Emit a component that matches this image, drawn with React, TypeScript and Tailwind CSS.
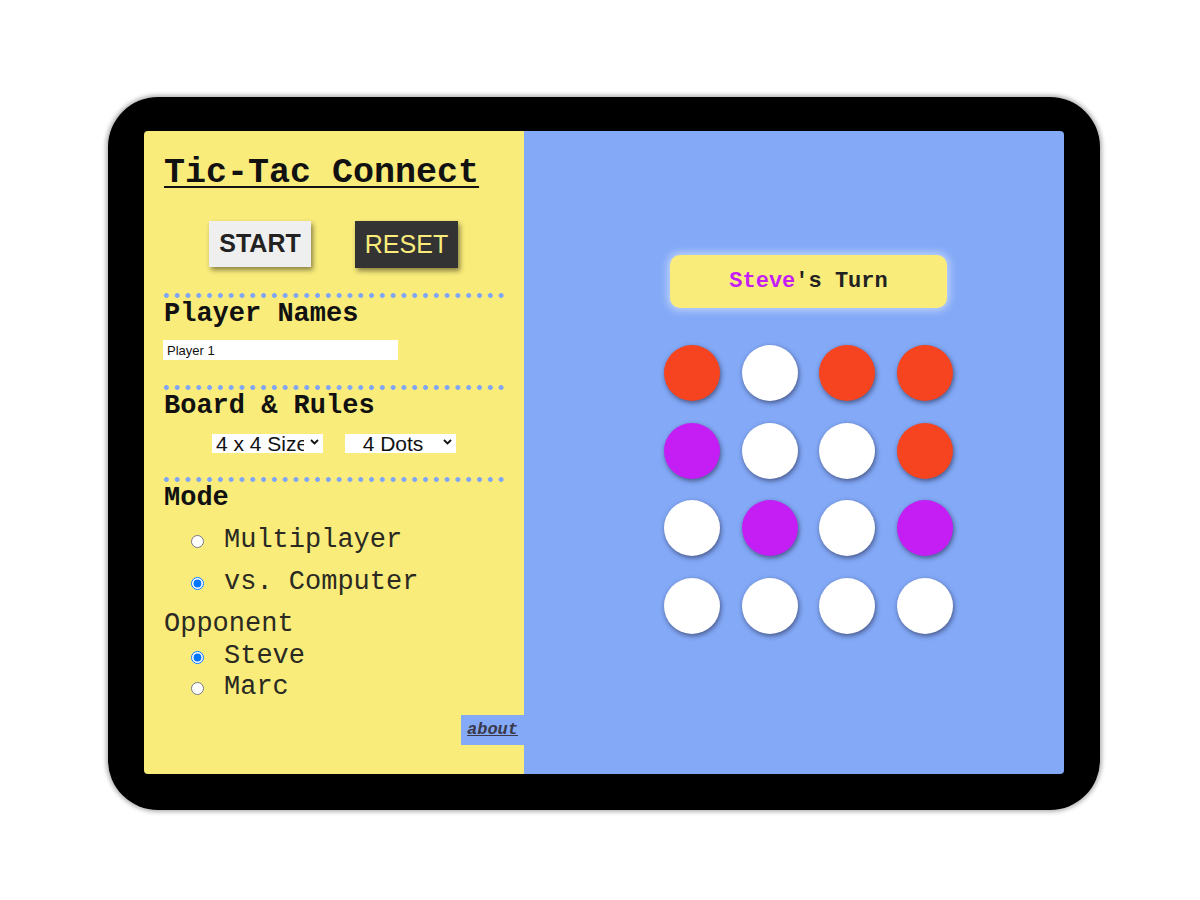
import React from "react";

const mono = "font-['Liberation_Mono','Courier_New',monospace]";
const sans = "font-['Liberation_Sans',Arial,sans-serif]";

const R = "bg-[#f5441f]";
const P = "bg-[#c41ef5]";
const W = "bg-white";

const board = [
  [R, W, R, R],
  [P, W, W, R],
  [W, P, W, P],
  [W, W, W, W],
];

function Dots() {
  return (
    <div className="ml-[-3.5px] mt-[25px] h-[5px] w-[345.6px] bg-[radial-gradient(circle,#7fa5f5_2.1px,transparent_2.7px)] bg-[length:10.8px_5px] bg-repeat-x" />
  );
}

function Heading({ children }: { children: React.ReactNode }) {
  return (
    <h2 className={`${mono} mt-[1px] text-[27px] leading-[30px] font-bold text-[#111]`}>{children}</h2>
  );
}

function Radio({ label, checked, name, mt }: { label: string; checked?: boolean; name: string; mt: string }) {
  return (
    <label className={`flex h-[30px] items-start ${mt}`}>
      <input
        type="radio"
        name={name}
        defaultChecked={checked}
        className="m-0 ml-[27px] mt-[10px] h-[13px] w-[13px]"
      />
      <span className={`${mono} ml-[20px] text-[27px] leading-[30px] text-[#2a2a22]`}>{label}</span>
    </label>
  );
}

function Select({ value, options }: { value: string; options: string[] }) {
  return (
    <div className="relative h-[19px] w-[111px]">
      <select
        defaultValue={value}
        className={`${sans} h-[19px] w-[111px] appearance-none border-0 bg-white pl-[4px] pr-[19px] text-[21px] leading-[19px] text-[#111] outline-none [text-align-last:center]`}
      >
        {options.map((o) => (
          <option key={o}>{o}</option>
        ))}
      </select>
      <svg
        className="pointer-events-none absolute right-[4px] top-[6px]"
        width="9"
        height="6"
        viewBox="0 0 9 6"
      >
        <path d="M1 1l3.5 3.5L8 1" fill="none" stroke="#111" strokeWidth="1.8" />
      </svg>
    </div>
  );
}

export default function App() {
  return (
    <div className="min-h-[900px] bg-white pl-[108px] pt-[97px]">
      <div className="h-[713px] w-[992px] rounded-[50px] bg-black pb-[36px] pl-[36px] pr-[36px] pt-[34px] shadow-[0_0_4px_2px_rgba(0,0,0,0.3)]">
        <div className="flex h-[643px] w-[920px] overflow-hidden rounded-[4px]">
          {/* left panel */}
          <div className="flex w-[380px] flex-col bg-[#f9ec7b] pl-[20px] pt-[22px]">
            <h1
              className={`${mono} text-[35px] leading-[40px] font-bold text-[#111] underline decoration-[2px] underline-offset-[4px]`}
            >
              Tic-Tac Connect
            </h1>

            <div className="ml-[45px] mt-[28px] flex items-start gap-[44px]">
              <button
                className={`${sans} h-[46px] w-[102px] bg-[#efefef] text-[25px] font-bold text-[#222] shadow-[2px_3px_5px_rgba(0,0,0,0.45)]`}
              >
                START
              </button>
              <button
                className={`${sans} h-[47px] w-[103px] bg-[#333333] text-[25px] text-[#f9ec7b] shadow-[2px_3px_5px_rgba(0,0,0,0.45)]`}
              >
                RESET
              </button>
            </div>

            <Dots />
            <Heading>Player Names</Heading>
            <input
              defaultValue="Player 1"
              className={`${sans} ml-[-1px] mt-[11px] h-[20px] w-[235px] bg-white px-[4px] text-[13px] text-[#111] outline-none`}
            />

            <Dots />
            <Heading>Board &amp; Rules</Heading>
            <div className="ml-[48px] mt-[12px] flex gap-[22px]">
              <Select value="4 x 4 Size" options={["3 x 3 Size", "4 x 4 Size", "5 x 5 Size"]} />
              <Select value="4 Dots" options={["3 Dots", "4 Dots", "5 Dots"]} />
            </div>

            <Dots />
            <Heading>Mode</Heading>
            <Radio name="mode" label="Multiplayer" mt="mt-[12px]" />
            <Radio name="mode" label="vs. Computer" checked mt="mt-[12px]" />

            <div className={`${mono} mt-[12px] text-[27px] leading-[30px] text-[#2a2a22]`}>Opponent</div>
            <Radio name="opp" label="Steve" checked mt="mt-[2px]" />
            <Radio name="opp" label="Marc" mt="mt-[1px]" />

            <a
              href="#"
              className={`${mono} mt-[13px] h-[30px] w-[63px] self-end bg-[#83a9f7] pl-[6px] text-[17px] leading-[30px] font-bold italic text-[#3a3a4a] underline`}
            >
              about
            </a>
          </div>

          {/* right panel */}
          <div className="flex flex-1 flex-col items-center bg-[#83a9f7] pl-[29px] pt-[124px]">
            <div
              className={`${mono} flex h-[53px] w-[277px] items-center justify-center rounded-[10px] bg-[#f9ec7b] text-[22px] font-bold text-[#222] shadow-[0_0_8px_2px_rgba(255,255,255,0.55)]`}
            >
              <span className="text-[#c41ef5]">Steve</span>'s Turn
            </div>

            <div className="mt-[37px] grid grid-cols-4 gap-[21.5px]">
              {board.flat().map((c, i) => (
                <div
                  key={i}
                  className={`h-[56px] w-[56px] rounded-full ${c} shadow-[1px_2px_5px_rgba(30,30,60,0.6)]`}
                />
              ))}
            </div>
          </div>
        </div>
      </div>
    </div>
  );
}
